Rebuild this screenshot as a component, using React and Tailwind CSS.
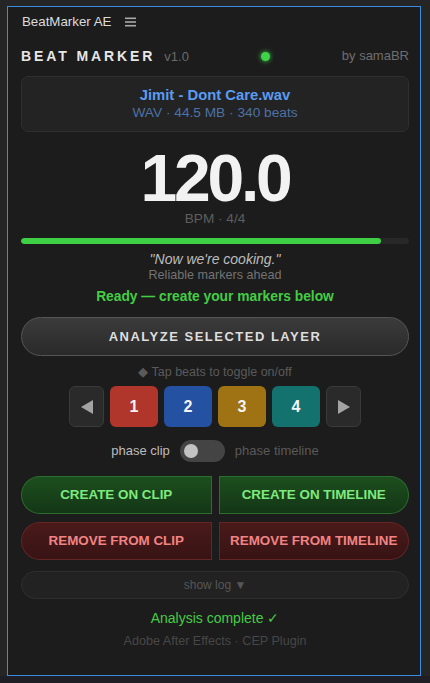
import React, { useState } from "react";

const BEATS = [
  { n: 1, cls: "bg-[#b0362c]" },
  { n: 2, cls: "bg-[#2451a2]" },
  { n: 3, cls: "bg-[#9f7214]" },
  { n: 4, cls: "bg-[#13726e]" },
];

const font = { fontFamily: '"Liberation Sans", Arial, sans-serif' };

export default function App() {
  const [timeline, setTimeline] = useState(false);

  return (
    <div className="w-[430px] h-[683px] bg-[#252525] overflow-hidden flex flex-col" style={font}>
      <div className="h-[676px] flex pt-[6px]">
        <div className="ml-[7px] w-[414px] h-[670px] border border-[#3b8be0] bg-[#1c1c1c] flex flex-col pl-[13px] pr-[11px]">
          {/* panel tab */}
          <div className="h-[30px] flex items-center gap-[14px] pl-[1px]">
            <span className="text-[13.3px] text-[#dcdcdc]">BeatMarker AE</span>
            <svg width="11" height="10" viewBox="0 0 11 10">
              <rect x="0" y="0.5" width="11" height="1.6" fill="#a8a8a8" />
              <rect x="0" y="4.2" width="11" height="1.6" fill="#a8a8a8" />
              <rect x="0" y="7.9" width="11" height="1.6" fill="#a8a8a8" />
            </svg>
          </div>

          {/* header */}
          <div className="mt-[10px] h-[18px] flex items-center justify-between">
            <div className="flex items-baseline gap-[9px]">
              <span className="text-[14px] font-bold tracking-[2.9px] text-[#e6e6e6]">BEAT MARKER</span>
              <span className="text-[13px] text-[#6a6a6a]">v1.0</span>
            </div>
            <span className="w-[9px] h-[9px] rounded-full bg-[#3fd34a] shadow-[0_0_5px_#3fd34a]" />
            <span className="text-[13px] text-[#6e6e6e]">by samaBR</span>
          </div>

          {/* file card */}
          <div className="mt-[11px] h-[56px] rounded-[7px] bg-[#232323] border border-[#2f2f2f] flex flex-col items-center justify-center">
            <div className="text-[14.8px] font-bold leading-[18px] text-[#5a9bf2]">Jimit - Dont Care.wav</div>
            <div className="text-[13.7px] leading-[18px] text-[#4c72a6]">WAV · 44.5 MB · 340 beats</div>
          </div>

          {/* bpm */}
          <div className="mt-[18px] h-[56px] text-center text-[66px] leading-[56px] font-bold tracking-[-3.2px] text-[#f2f2f2]">
            120.0
          </div>
          <div className="mt-[5px] text-center text-[13.6px] leading-[16px] text-[#5e5e5e]">BPM · 4/4</div>

          <div className="mt-[11px] h-[6px] rounded-full bg-[#282828] overflow-hidden">
            <div className="h-full rounded-full bg-[#3ecf45]" style={{ width: "92.8%" }} />
          </div>

          <div className="mt-[7px] text-center text-[14px] leading-[16px] italic text-[#bdbdbd]">"Now we're cooking."</div>
          <div className="text-center text-[12.6px] leading-[16px] text-[#737373]">Reliable markers ahead</div>
          <div className="mt-[6px] text-center text-[13.8px] leading-[16px] font-bold text-[#45cc45]">
            Ready — create your markers below
          </div>

          {/* analyze */}
          <button className="mt-[12px] h-[39px] rounded-full border border-[#555555] bg-gradient-to-b from-[#3b3b3b] to-[#2a2a2a] text-[13px] font-bold tracking-[1.5px] text-[#dedede]">
            ANALYZE SELECTED LAYER
          </button>

          <div className="mt-[8px] text-center text-[12.5px] leading-[16px] text-[#5a5a5a]">◆ Tap beats to toggle on/off</div>

          {/* beats */}
          <div className="mt-[6px] h-[41px] flex justify-center gap-[6px]">
            <button className="w-[35px] h-full rounded-[6px] bg-[#2a2a2a] border border-[#3a3a3a] flex items-center justify-center">
              <svg width="12" height="14" viewBox="0 0 12 14"><polygon points="12,0 12,14 0,7" fill="#a3a3a3" /></svg>
            </button>
            {BEATS.map((b) => (
              <button
                key={b.n}
                className={`w-[48px] h-full rounded-[6px] ${b.cls} text-[16px] font-bold text-[#f4f4f4]`}
              >
                {b.n}
              </button>
            ))}
            <button className="w-[35px] h-full rounded-[6px] bg-[#2a2a2a] border border-[#3a3a3a] flex items-center justify-center">
              <svg width="12" height="14" viewBox="0 0 12 14"><polygon points="0,0 0,14 12,7" fill="#a3a3a3" /></svg>
            </button>
          </div>

          {/* phase toggle */}
          <div className="mt-[13px] h-[22px] flex items-center justify-center gap-[10px]">
            <span className="text-[13px] text-[#bcbcbc]">phase clip</span>
            <button
              onClick={() => setTimeline(!timeline)}
              className="w-[45px] h-[22px] rounded-full bg-[#444444] flex items-center px-[4px]"
            >
              <span className={`w-[14px] h-[14px] rounded-full bg-[#c2c2c2] ${timeline ? "ml-auto" : ""}`} />
            </button>
            <span className="text-[13px] text-[#595959]">phase timeline</span>
          </div>

          {/* create */}
          <div className="mt-[14px] h-[38px] grid grid-cols-2 gap-[7px]">
            <button className="rounded-l-full rounded-r-[5px] border border-[#2b6e2d] bg-gradient-to-b from-[#1c4f1e] to-[#143616] text-[13.4px] font-bold text-[#7eea7e]">
              CREATE ON CLIP
            </button>
            <button className="rounded-r-full rounded-l-[5px] border border-[#2b6e2d] bg-gradient-to-b from-[#1c4f1e] to-[#143616] text-[13.4px] font-bold text-[#7eea7e]">
              CREATE ON TIMELINE
            </button>
          </div>

          {/* remove */}
          <div className="mt-[8px] h-[38px] grid grid-cols-2 gap-[7px]">
            <button className="rounded-l-full rounded-r-[5px] border border-[#662424] bg-gradient-to-b from-[#4a1a1a] to-[#381314] text-[13.4px] font-bold text-[#f08484]">
              REMOVE FROM CLIP
            </button>
            <button className="rounded-r-full rounded-l-[5px] border border-[#662424] bg-gradient-to-b from-[#4a1a1a] to-[#381314] text-[13.4px] font-bold text-[#f08484]">
              REMOVE FROM TIMELINE
            </button>
          </div>

          <button className="mt-[11px] h-[28px] rounded-full bg-[#222222] border border-[#2e2e2e] text-[12px] text-[#565656]">
            show log ▼
          </button>

          <div className="mt-[10px] text-center text-[14px] leading-[18px] text-[#45cc45]">Analysis complete ✓</div>
          <div className="mt-[6px] text-center text-[12.6px] leading-[16px] text-[#474747]">Adobe After Effects · CEP Plugin</div>
        </div>
      </div>
      <div className="flex-1 bg-[#1e1e24]" />
    </div>
  );
}
